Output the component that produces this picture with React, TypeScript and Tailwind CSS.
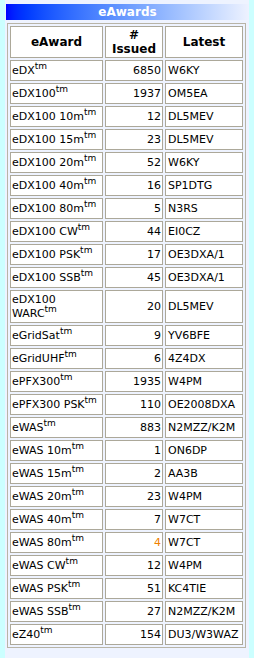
import React from 'react';

type Row = { name: string; count: number; latest: string; tall?: boolean; hot?: boolean };

const rows: Row[] = [
    { name: 'eDX', count: 6850, latest: 'W6KY' },
    { name: 'eDX100', count: 1937, latest: 'OM5EA' },
    { name: 'eDX100 10m', count: 12, latest: 'DL5MEV' },
    { name: 'eDX100 15m', count: 23, latest: 'DL5MEV' },
    { name: 'eDX100 20m', count: 52, latest: 'W6KY' },
    { name: 'eDX100 40m', count: 16, latest: 'SP1DTG' },
    { name: 'eDX100 80m', count: 5, latest: 'N3RS' },
    { name: 'eDX100 CW', count: 44, latest: 'EI0CZ' },
    { name: 'eDX100 PSK', count: 17, latest: 'OE3DXA/1' },
    { name: 'eDX100 SSB', count: 45, latest: 'OE3DXA/1' },
    { name: 'eDX100 WARC', count: 20, latest: 'DL5MEV', tall: true },
    { name: 'eGridSat', count: 9, latest: 'YV6BFE' },
    { name: 'eGridUHF', count: 6, latest: '4Z4DX' },
    { name: 'ePFX300', count: 1935, latest: 'W4PM' },
    { name: 'ePFX300 PSK', count: 110, latest: 'OE2008DXA' },
    { name: 'eWAS', count: 883, latest: 'N2MZZ/K2M' },
    { name: 'eWAS 10m', count: 1, latest: 'ON6DP' },
    { name: 'eWAS 15m', count: 2, latest: 'AA3B' },
    { name: 'eWAS 20m', count: 23, latest: 'W4PM' },
    { name: 'eWAS 40m', count: 7, latest: 'W7CT' },
    { name: 'eWAS 80m', count: 4, latest: 'W7CT', hot: true },
    { name: 'eWAS CW', count: 12, latest: 'W4PM' },
    { name: 'eWAS PSK', count: 51, latest: 'KC4TIE' },
    { name: 'eWAS SSB', count: 27, latest: 'N2MZZ/K2M' },
    { name: 'eZ40', count: 154, latest: 'DU3/W3WAZ' },
];

const cell = 'border border-[#aca899] bg-white px-[1px] py-0 align-middle';

function Tm() {
    return <sup className="text-[9px]">tm</sup>;
}

export default function App() {
    return (
        <div
            className="min-h-screen bg-[#ccffff] px-[5px] text-black"
            style={{ fontFamily: '"DejaVu Sans", Verdana, sans-serif' }}
        >
            <div className="w-[244px] min-h-[658px] bg-[#eef3ff] pt-[4px] pl-[1px]">
                {/* Barra de título */}
                <div className="h-[16px] w-[243px] bg-gradient-to-r from-[#0000ff] to-[#eef2ff] text-center text-[12px] font-bold leading-[16px] text-white">
                    eAwards
                </div>

                <table className="mt-[3px] ml-[1px] w-[239px] table-fixed border-separate border-spacing-[2px] border border-[#b8b4a6] text-[11px] leading-[14px]">
                    <thead>
                        <tr>
                            <th className={`${cell} h-[32px] w-[93px] text-center text-[12px] font-bold`}>eAward</th>
                            <th className={`${cell} h-[32px] w-[58px] text-center text-[12px] font-bold`}>
                                #<br />Issued
                            </th>
                            <th className={`${cell} h-[32px] w-[78px] text-center text-[12px] font-bold`}>Latest</th>
                        </tr>
                    </thead>
                    <tbody>
                        {rows.map((r) => (
                            <tr key={r.name}>
                                <td className={`${cell} ${r.tall ? 'h-[33px]' : 'h-[21px]'} whitespace-nowrap`}>
                                    {r.tall ? (
                                        <>
                                            eDX100
                                            <br />
                                            WARC
                                            <Tm />
                                        </>
                                    ) : (
                                        <>
                                            {r.name}
                                            <Tm />
                                        </>
                                    )}
                                </td>
                                <td className={`${cell} text-right ${r.hot ? 'text-[#f08000]' : ''}`}>{r.count}</td>
                                <td className={`${cell} whitespace-nowrap pl-[2px]`}>{r.latest}</td>
                            </tr>
                        ))}
                    </tbody>
                </table>
            </div>
        </div>
    );
}
